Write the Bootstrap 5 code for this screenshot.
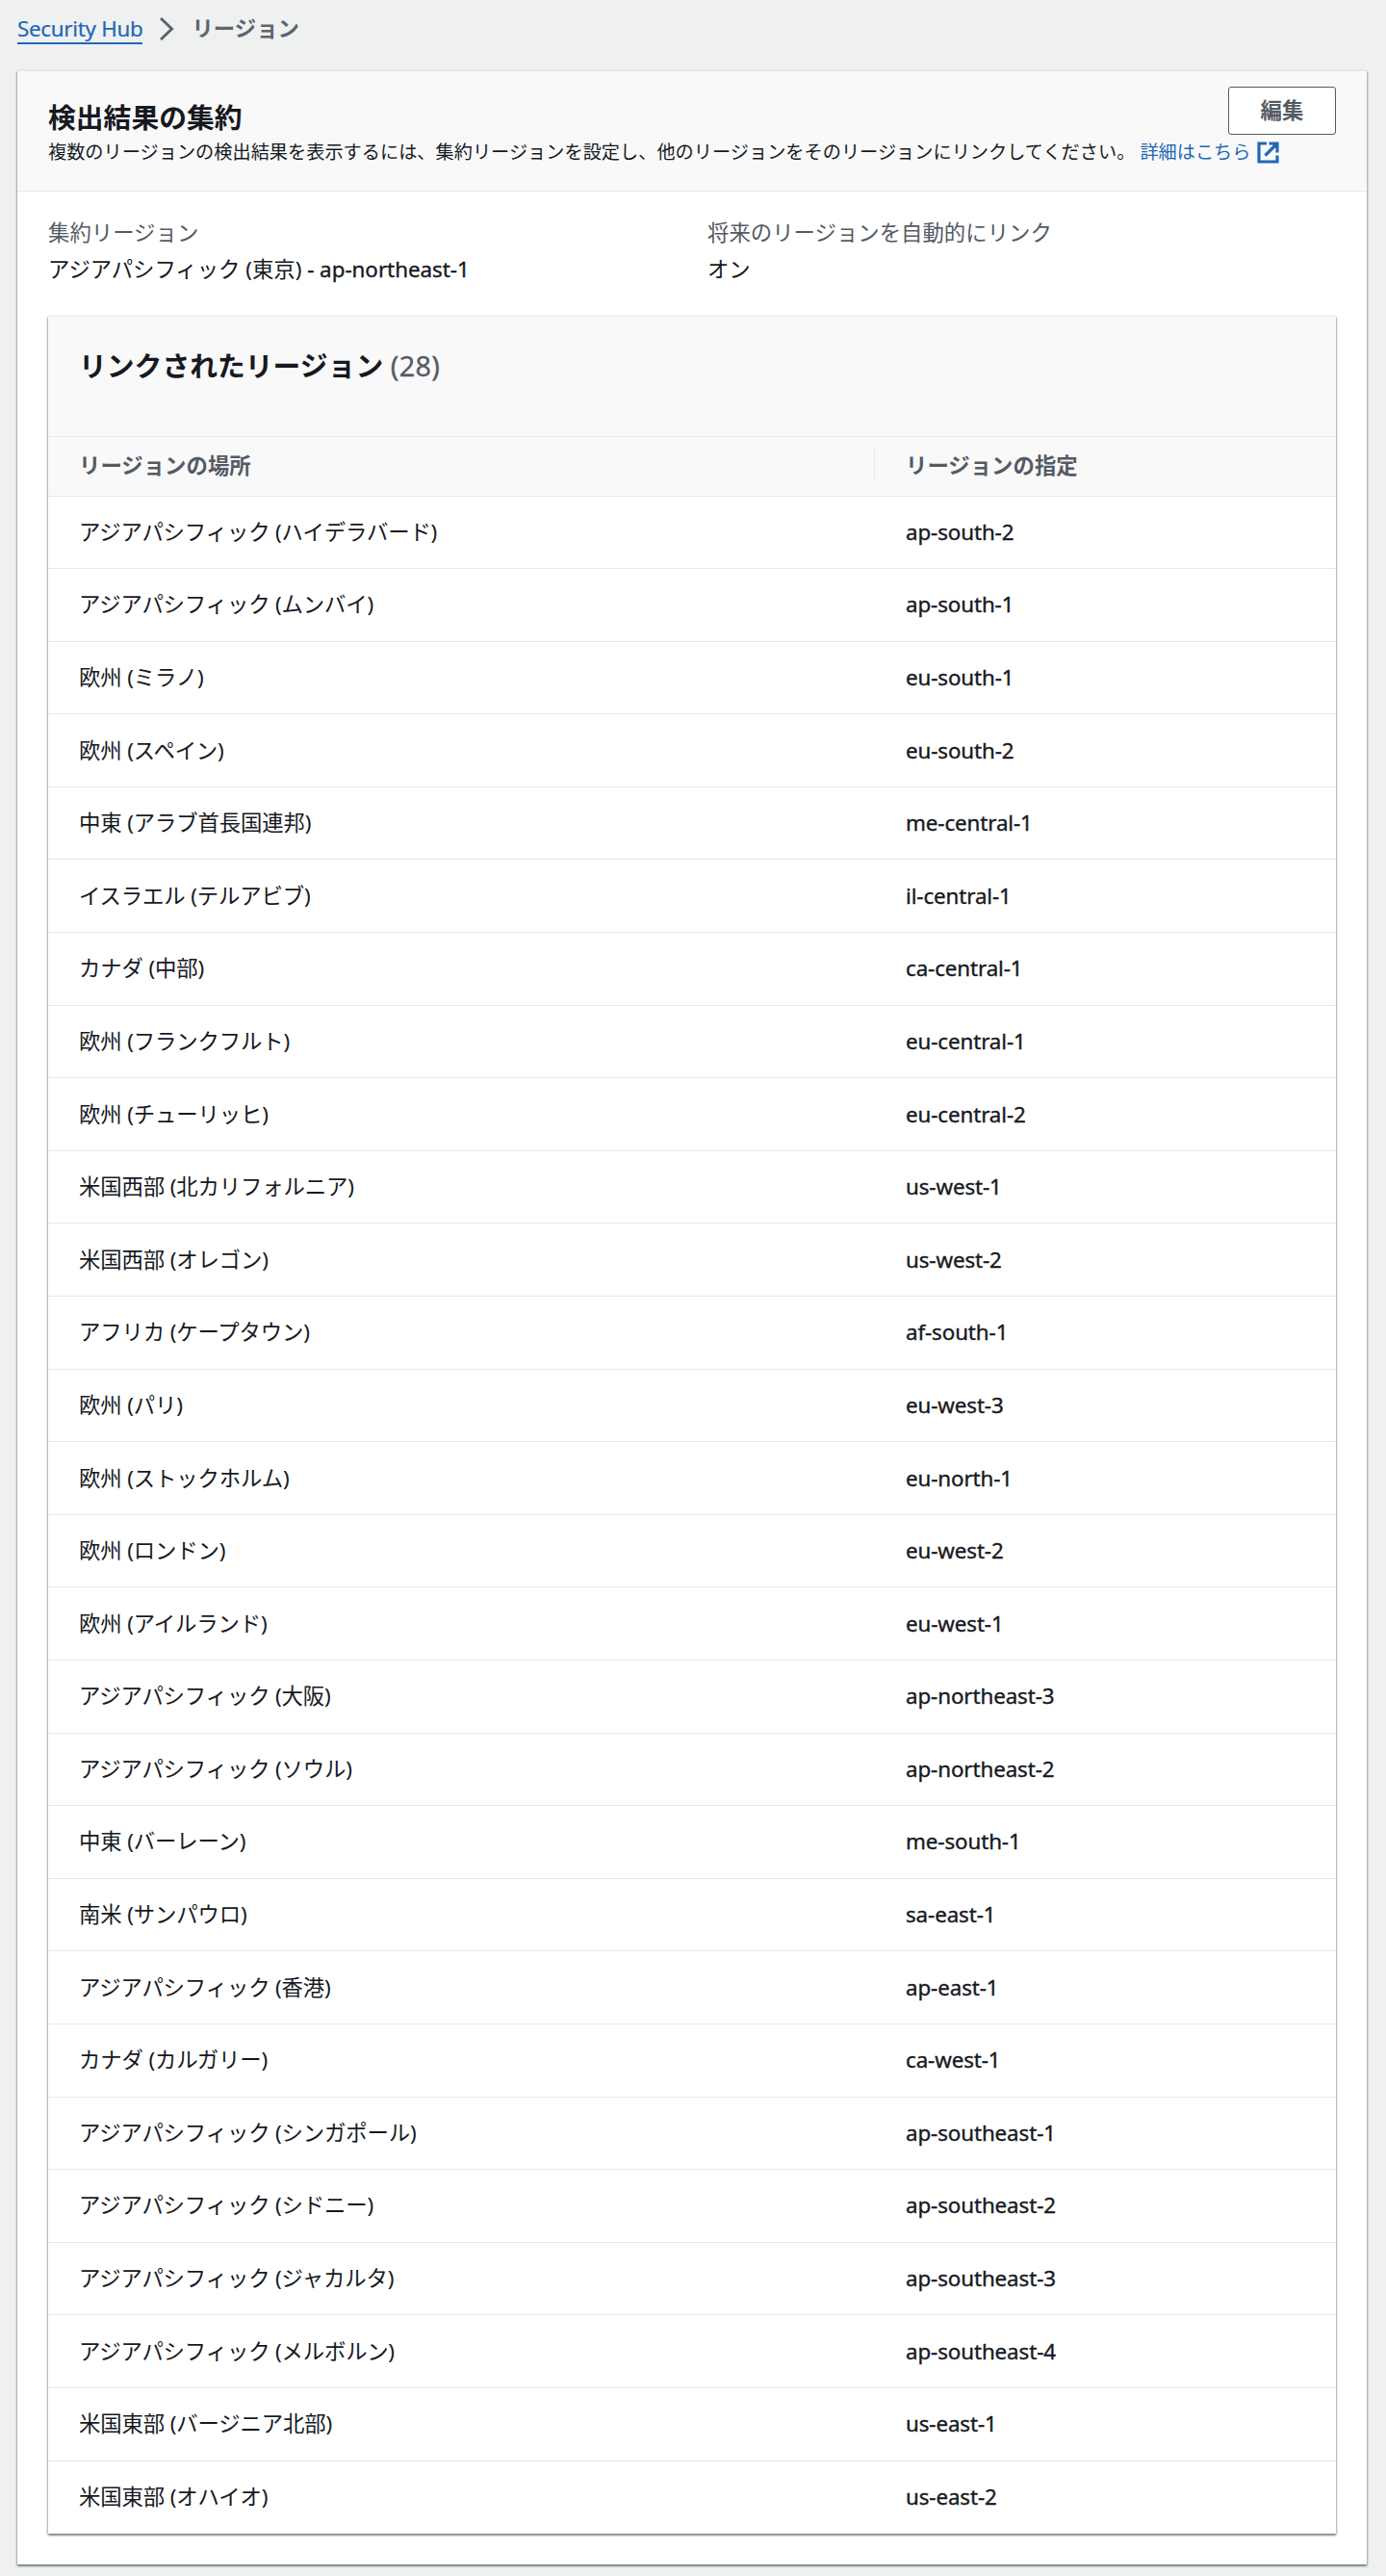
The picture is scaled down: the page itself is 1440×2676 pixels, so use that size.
<!DOCTYPE html>
<html lang="ja">
<head>
<meta charset="utf-8">
<title>Security Hub - リージョン</title>
<meta name="viewport" content="width=device-width, initial-scale=1">
<link rel="stylesheet" href="https://cdn.jsdelivr.net/npm/bootstrap@5.3.0/dist/css/bootstrap.min.css">
<style>
  body { background: #eff1f1; color: #16191f; font-family: "Noto Sans", "Noto Sans CJK JP", sans-serif; font-size: 22.4px; line-height: 36px; }
  .page-shell { padding: 12px 20px 12px 18px; }
  .trail { height: 36px; margin-bottom: 25px; gap: 17px; }
  .trail a { color: #2268b4; text-decoration: none; border-bottom: 2px solid #2268b4; line-height: 35px; height: 34px; letter-spacing: -.3px; -webkit-text-stroke: .2px; }
  .trail .here { color: #5c656f; font-weight: 700; margin-left: 1px; line-height: 35px; }
  .panel { background: #fff; border-top: 1px solid #e6e9e9; box-shadow: 0 2px 2px 0 rgba(0,28,36,.36), 1px 1px 2px 0 rgba(0,28,36,.22), -1px 1px 2px 0 rgba(0,28,36,.22); }
  .panel-head { background: #f9f9f9; border-bottom: 1px solid #e6e8e9; }
  .main-head { height: 125px; padding: 16px 32px 0; }
  .main-head h1 { font-size: 28.8px; font-weight: 700; line-height: 40px; margin: 12px 0 0; }
  .main-head p { font-size: 19.2px; line-height: 30px; margin: 1px 0 0; }
  .main-head p a { color: #2268b4; text-decoration: none; }
  .main-head p svg { margin: -3px 0 0 1px; }
  .btn-edit { flex: 0 0 112px; height: 50px; background: #fff; border: 1px solid #545b64; border-radius: 3px; color: #545b64; font-size: 22.4px; font-weight: 700; line-height: 46px; padding: 0; }
  .head-copy { flex: 1 1 0; min-width: 0; }
  .facts { padding: 24px 32px 29px; }
  .facts dt { font-weight: 400; color: #545b64; line-height: 38px; }
  .facts dd { margin: 0; line-height: 38px; letter-spacing: -.03px; }
  .facts dd span, .regions td + td { -webkit-text-stroke: .35px; }
  .panel-body { padding: 0 32px 32px; }
  .inner-head { height: 125px; padding: 31px 32px 0; }
  .inner-head h2 { font-size: 28.8px; font-weight: 700; line-height: 40px; margin: 0; }
  .inner-head h2 span { font-weight: 400; color: #545b64; letter-spacing: .3px; -webkit-text-stroke: .3px; }
  .regions { table-layout: fixed; margin: 0; color: #16191f; }
  .regions > :not(caption) > * > * { padding: 0 0 0 32px; vertical-align: middle; border-color: #e7e9ea; color: #16191f; }
  .regions > thead > tr > th { height: 61px; background: #f9f9f9; color: #545b64; font-weight: 700; line-height: 34px; }
  .regions th + th > div { border-left: 1px solid #e7e9ea; margin-left: -33px; padding-left: 32px; }
  .regions > tbody > tr > td { height: 75.6px; letter-spacing: -.15px; }
  .regions > tbody > tr > td + td { padding-left: 33px; letter-spacing: -.12px; }
  .regions > thead > tr > th + th { padding-left: 33px; }
  .regions tbody tr:last-child td { border-bottom: 0; }
</style>
</head>
<body>
<div class="page-shell">
  <nav class="trail d-flex align-items-start" aria-label="breadcrumb">
    <a href="#">Security Hub</a>
    <svg width="16" height="26" viewBox="0 0 16 26" fill="none" stroke="#5c656f" stroke-width="3" class="mt-1"><path d="M2 3L13.5 14L2 25"/></svg>
    <span class="here">リージョン</span>
  </nav>

  <main class="panel">
    <header class="panel-head main-head d-flex justify-content-between align-items-start">
      <div class="head-copy">
        <h1>検出結果の集約</h1>
        <p class="text-nowrap">複数のリージョンの検出結果を表示するには、集約リージョンを設定し、他のリージョンをそのリージョンにリンクしてください。 <a href="#">詳細はこちら <svg width="23" height="23" viewBox="0 0 23 23" fill="none" stroke="#2268b4" stroke-width="3.2"><path d="M10 2H2V21H21V14.5M12.5 2H21V11.5M20.5 2.5L8.5 14.5"/><path d="M15 2H21V8Z" fill="#2268b4" stroke="none"/></svg></a></p>
      </div>
      <button type="button" class="btn btn-edit">編集</button>
    </header>

    <dl class="facts row g-0 mb-0">
      <div class="col-6"><dt>集約リージョン</dt><dd>アジアパシフィック (東京) <span>- ap-northeast-1</span></dd></div>
      <div class="col-6 ps-3"><dt>将来のリージョンを自動的にリンク</dt><dd>オン</dd></div>
    </dl>

    <div class="panel-body">
    <section class="panel">
      <header class="panel-head inner-head"><h2>リンクされたリージョン <span>(28)</span></h2></header>
      <table class="table regions">
        <colgroup><col style="width:858px"><col></colgroup>
        <thead><tr><th>リージョンの場所</th><th><div>リージョンの指定</div></th></tr></thead>
        <tbody>
          <tr><td>アジアパシフィック (ハイデラバード)</td><td>ap-south-2</td></tr>
          <tr><td>アジアパシフィック (ムンバイ)</td><td>ap-south-1</td></tr>
          <tr><td>欧州 (ミラノ)</td><td>eu-south-1</td></tr>
          <tr><td>欧州 (スペイン)</td><td>eu-south-2</td></tr>
          <tr><td>中東 (アラブ首長国連邦)</td><td>me-central-1</td></tr>
          <tr><td>イスラエル (テルアビブ)</td><td>il-central-1</td></tr>
          <tr><td>カナダ (中部)</td><td>ca-central-1</td></tr>
          <tr><td>欧州 (フランクフルト)</td><td>eu-central-1</td></tr>
          <tr><td>欧州 (チューリッヒ)</td><td>eu-central-2</td></tr>
          <tr><td>米国西部 (北カリフォルニア)</td><td>us-west-1</td></tr>
          <tr><td>米国西部 (オレゴン)</td><td>us-west-2</td></tr>
          <tr><td>アフリカ (ケープタウン)</td><td>af-south-1</td></tr>
          <tr><td>欧州 (パリ)</td><td>eu-west-3</td></tr>
          <tr><td>欧州 (ストックホルム)</td><td>eu-north-1</td></tr>
          <tr><td>欧州 (ロンドン)</td><td>eu-west-2</td></tr>
          <tr><td>欧州 (アイルランド)</td><td>eu-west-1</td></tr>
          <tr><td>アジアパシフィック (大阪)</td><td>ap-northeast-3</td></tr>
          <tr><td>アジアパシフィック (ソウル)</td><td>ap-northeast-2</td></tr>
          <tr><td>中東 (バーレーン)</td><td>me-south-1</td></tr>
          <tr><td>南米 (サンパウロ)</td><td>sa-east-1</td></tr>
          <tr><td>アジアパシフィック (香港)</td><td>ap-east-1</td></tr>
          <tr><td>カナダ (カルガリー)</td><td>ca-west-1</td></tr>
          <tr><td>アジアパシフィック (シンガポール)</td><td>ap-southeast-1</td></tr>
          <tr><td>アジアパシフィック (シドニー)</td><td>ap-southeast-2</td></tr>
          <tr><td>アジアパシフィック (ジャカルタ)</td><td>ap-southeast-3</td></tr>
          <tr><td>アジアパシフィック (メルボルン)</td><td>ap-southeast-4</td></tr>
          <tr><td>米国東部 (バージニア北部)</td><td>us-east-1</td></tr>
          <tr><td>米国東部 (オハイオ)</td><td>us-east-2</td></tr>
        </tbody>
      </table>
    </section>
    </div>
  </main>
</div>
<script src="https://cdn.jsdelivr.net/npm/bootstrap@5.3.0/dist/js/bootstrap.bundle.min.js"></script>
</body>
</html>
